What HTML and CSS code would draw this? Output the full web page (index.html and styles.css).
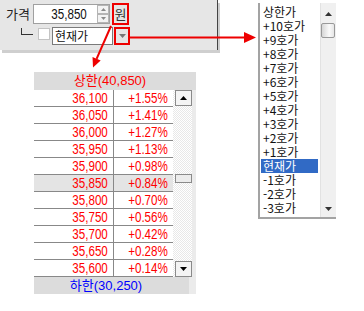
FILE: index.html
```html
<!DOCTYPE html>
<html lang="ko">
<head>
<meta charset="utf-8">
<title>호가 선택</title>
<link rel="stylesheet" href="styles.css">
</head>
<body>
<div class="page">
  <div class="panel">
    <div class="prow prow-1">
      <span class="lbl">가격</span>
      <div class="numbox">
        <span class="numval"><span class="num">35,850</span></span>
        <div class="spin">
          <span class="spin-btn"><svg width="5" height="3" viewBox="0 0 5 3"><path d="M0 3L2.5 0L5 3Z" fill="#8a8a8a"/></svg></span>
          <span class="spin-btn"><svg width="5" height="3" viewBox="0 0 5 3"><path d="M0 0L2.5 3L5 0Z" fill="#8a8a8a"/></svg></span>
        </div>
      </div>
      <span class="won">원</span>
    </div>
    <div class="prow prow-2">
      <span class="tree"></span>
      <span class="chk"></span>
      <div class="combo">현재가</div>
      <span class="dd"><svg width="7" height="4" viewBox="0 0 7 4"><path d="M0 0L3.5 4L7 0Z" fill="#777"/></svg></span>
    </div>
  </div>

  <div class="ladder">
    <div class="lhead">상한(40,850)</div>
    <div class="lbody">
      <div class="ltable">
        <div class="lrow"><span class="c-price"><span class="num">36,100</span></span><span class="c-rate"><span class="num">+1.55%</span></span></div>
        <div class="lrow"><span class="c-price"><span class="num">36,050</span></span><span class="c-rate"><span class="num">+1.41%</span></span></div>
        <div class="lrow"><span class="c-price"><span class="num">36,000</span></span><span class="c-rate"><span class="num">+1.27%</span></span></div>
        <div class="lrow"><span class="c-price"><span class="num">35,950</span></span><span class="c-rate"><span class="num">+1.13%</span></span></div>
        <div class="lrow"><span class="c-price"><span class="num">35,900</span></span><span class="c-rate"><span class="num">+0.98%</span></span></div>
        <div class="lrow cur"><span class="c-price"><span class="num">35,850</span></span><span class="c-rate"><span class="num">+0.84%</span></span></div>
        <div class="lrow"><span class="c-price"><span class="num">35,800</span></span><span class="c-rate"><span class="num">+0.70%</span></span></div>
        <div class="lrow"><span class="c-price"><span class="num">35,750</span></span><span class="c-rate"><span class="num">+0.56%</span></span></div>
        <div class="lrow"><span class="c-price"><span class="num">35,700</span></span><span class="c-rate"><span class="num">+0.42%</span></span></div>
        <div class="lrow"><span class="c-price"><span class="num">35,650</span></span><span class="c-rate"><span class="num">+0.28%</span></span></div>
        <div class="lrow"><span class="c-price"><span class="num">35,600</span></span><span class="c-rate"><span class="num">+0.14%</span></span></div>
      </div>
      <div class="lscroll">
        <span class="sbtn"><svg width="7" height="4" viewBox="0 0 7 4"><path d="M0 4L3.5 0L7 4Z" fill="#000"/></svg></span>
        <span class="sthumb"></span>
        <span class="sbtn down"><svg width="7" height="4" viewBox="0 0 7 4"><path d="M0 0L3.5 4L7 0Z" fill="#000"/></svg></span>
      </div>
    </div>
    <div class="lfoot">하한(30,250)</div>
  </div>

  <div class="popup">
    <div class="plist">
      <div class="pitem">상한가</div>
      <div class="pitem">+10호가</div>
      <div class="pitem">+9호가</div>
      <div class="pitem">+8호가</div>
      <div class="pitem">+7호가</div>
      <div class="pitem">+6호가</div>
      <div class="pitem">+5호가</div>
      <div class="pitem">+4호가</div>
      <div class="pitem">+3호가</div>
      <div class="pitem">+2호가</div>
      <div class="pitem">+1호가</div>
      <div class="pitem sel">현재가</div>
      <div class="pitem">-1호가</div>
      <div class="pitem">-2호가</div>
      <div class="pitem">-3호가</div>
    </div>
    <div class="pscroll">
      <svg class="parr-up" width="7" height="4" viewBox="0 0 7 4"><path d="M0 4L3.5 0L7 4Z" fill="#333"/></svg>
      <span class="pthumb"></span>
      <svg class="parr-down" width="7" height="4" viewBox="0 0 7 4"><path d="M0 0L3.5 4L7 0Z" fill="#333"/></svg>
    </div>
  </div>

  <svg class="arrows" width="364" height="311" viewBox="0 0 364 311">
    <line x1="130" y1="37.5" x2="247" y2="37.5" stroke="#e00" stroke-width="2"/>
    <path d="M244 32L256 37.5L244 43Z" fill="#e00"/>
    <line x1="111" y1="26" x2="96.6" y2="58.8" stroke="#e00" stroke-width="2"/>
    <path d="M100.7 60.6L93 67.5L92.5 57Z" fill="#e00"/>
  </svg>
</div>
</body>
</html>
```

FILE: styles.css
```css
* { box-sizing: border-box; }

body {
  margin: 0;
  background: #fff;
  font-family: "Liberation Sans", "Noto Sans CJK KR", sans-serif;
  color: #111;
}

.page {
  position: relative;
  width: 364px;
  height: 311px;
  overflow: hidden;
}

/* narrow, tall digits like the bitmap UI font */
.num {
  display: inline-block;
  transform: scaleX(0.83);
  transform-origin: 100% 50%;
  white-space: nowrap;
}

/* top settings panel */
.panel {
  width: 218px;
  height: 50px;
  padding-top: 3px;
  background: #e6e6e6;
  border-right: 1px solid #444;
  box-shadow: 2px 3px 0 #cfcfcf;
}

.prow { display: flex; align-items: flex-start; }
.prow-1 { height: 22px; }
.prow-2 { height: 18px; margin-top: 2px; }

.lbl {
  margin-left: 6px;
  width: 27px;
  margin-top: 2px;
  font-family: "Noto Sans CJK KR", sans-serif;
  font-size: 13px;
  line-height: 18px;
  color: #222;
}

.numbox {
  margin-top: 1px;
  width: 77px;
  height: 20px;
  display: flex;
  background: #fff;
  border: 1px solid #a0a0a0;
}

.numval {
  flex: 1;
  text-align: right;
  padding-right: 10px;
  font-size: 14px;
  line-height: 18px;
  color: #111;
}

.spin {
  width: 12px;
  display: flex;
  flex-direction: column;
}

.spin-btn {
  flex: 1;
  display: flex;
  align-items: center;
  justify-content: center;
  background: #f3f3f3;
  border: 1px solid #b5b5b5;
}

.won {
  margin-left: 2px;
  width: 17px;
  height: 22px;
  border: 2px solid #e00;
  display: flex;
  align-items: center;
  justify-content: center;
  font-family: "Noto Sans CJK KR", sans-serif;
  font-size: 13px;
  line-height: 14px;
  color: #333;
}

.tree {
  margin-left: 21px;
  margin-top: 1px;
  width: 12px;
  height: 7px;
  border-left: 1px solid #333;
  border-bottom: 1px solid #333;
}

.chk {
  margin-left: 5px;
  margin-top: 1px;
  width: 12px;
  height: 12px;
  background: #fff;
  border: 1px solid #c4c4c4;
}

.combo {
  margin-left: 2px;
  width: 61px;
  height: 18px;
  padding-left: 2px;
  background: #fff;
  border: 1px solid #7a7a7a;
  font-family: "Noto Sans CJK KR", sans-serif;
  font-size: 12px;
  line-height: 16px;
  color: #111;
}

.dd {
  margin-left: 1px;
  width: 16px;
  height: 18px;
  border: 2px solid #e00;
  display: flex;
  align-items: center;
  justify-content: center;
  background: #e6e6e6;
}

/* price ladder */
.ladder {
  margin: 22px 0 0 34px;
  width: 162px;
  background: #ebebeb;
}

.lhead {
  height: 18px;
  padding-right: 10px;
  background: #dcdcdc;
  color: #f00;
  text-align: center;
  font-size: 13px;
  line-height: 18px;
}

.lbody { display: flex; height: 187px; }

.ltable { width: 139px; background: #fff; }

.lrow {
  display: flex;
  height: 17px;
  border-bottom: 1px solid #888;
  color: #f00;
  font-size: 14px;
  line-height: 16px;
}

.lrow.cur { background: #e4e4e4; }

.c-price {
  width: 80px;
  padding-right: 5px;
  border-right: 1px solid #888;
  text-align: right;
}

.c-rate {
  flex: 1;
  padding-right: 5px;
  text-align: right;
}

.lscroll {
  width: 19px;
  display: flex;
  flex-direction: column;
  align-items: flex-end;
  background: repeating-conic-gradient(#e8e8e8 0 25%, #fff 0 50%) 0 0 / 2px 2px;
}

.sbtn {
  width: 17px;
  height: 16px;
  display: flex;
  align-items: center;
  justify-content: center;
  background: #f4f4f4;
  border: 1px solid #8a8a8a;
}

.sbtn.down { margin-top: auto; }

.sthumb {
  width: 17px;
  height: 9px;
  margin-top: 68px;
  background: #ececec;
  border: 1px solid #8a8a8a;
}

.lfoot {
  width: 155px;
  height: 17px;
  padding-right: 11px;
  background: #dcdcdc;
  color: #00f;
  text-align: center;
  font-size: 13px;
  line-height: 17px;
}

/* dropdown popup list */
.popup {
  position: absolute;
  left: 258px;
  top: 3px;
  width: 78px;
  height: 216px;
  display: flex;
  background: #fff;
  border-left: 2px solid #a3a3a3;
  border-bottom: 2px solid #a3a3a3;
}

.plist { width: 60px; padding-top: 2px; }

.pitem {
  width: 57px;
  height: 14px;
  margin-left: 1px;
  padding-left: 2px;
  font-family: "Noto Sans CJK KR", sans-serif;
  font-size: 12px;
  line-height: 14px;
  color: #111;
  white-space: nowrap;
}

.pitem.sel { background: #316ac5; color: #fff; }

.pscroll {
  width: 16px;
  display: flex;
  flex-direction: column;
  align-items: center;
  background: #f0f0f0;
  border-left: 1px solid #e2e2e2;
}

.parr-up { margin-top: 9px; }

.pthumb {
  align-self: flex-start;
  width: 14px;
  height: 15px;
  margin-top: 7px;
  border: 1px solid #999;
  border-radius: 2px;
  background: linear-gradient(to right, #d6d6d6, #fafafa 60%, #e6e6e6);
}

.parr-down { margin-top: auto; margin-bottom: 6px; }

/* annotation arrows */
.arrows {
  position: absolute;
  left: 0;
  top: 0;
  pointer-events: none;
}
```
